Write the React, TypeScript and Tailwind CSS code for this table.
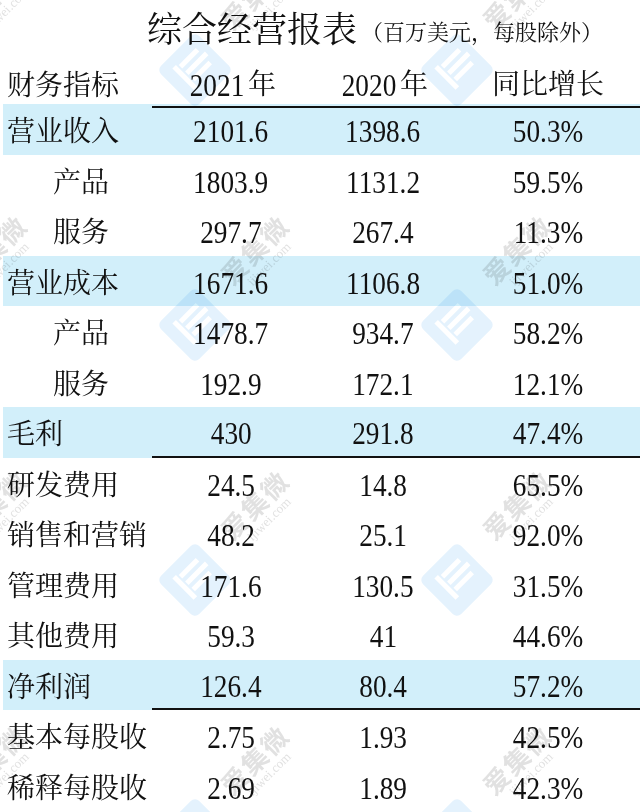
import clsx from "clsx";

type Row = {
  label: string;
  a: string;
  b: string;
  c: string;
  hl?: boolean;
  indent?: boolean;
  rule?: boolean;
};

const rows: Row[] = [
  { label: "营业收入", a: "2101.6", b: "1398.6", c: "50.3%", hl: true },
  { label: "产品", a: "1803.9", b: "1131.2", c: "59.5%", indent: true },
  { label: "服务", a: "297.7", b: "267.4", c: "11.3%", indent: true },
  { label: "营业成本", a: "1671.6", b: "1106.8", c: "51.0%", hl: true },
  { label: "产品", a: "1478.7", b: "934.7", c: "58.2%", indent: true },
  { label: "服务", a: "192.9", b: "172.1", c: "12.1%", indent: true },
  { label: "毛利", a: "430", b: "291.8", c: "47.4%", hl: true, rule: true },
  { label: "研发费用", a: "24.5", b: "14.8", c: "65.5%" },
  { label: "销售和营销", a: "48.2", b: "25.1", c: "92.0%" },
  { label: "管理费用", a: "171.6", b: "130.5", c: "31.5%" },
  { label: "其他费用", a: "59.3", b: "41", c: "44.6%" },
  { label: "净利润", a: "126.4", b: "80.4", c: "57.2%", hl: true, rule: true },
  { label: "基本每股收", a: "2.75", b: "1.93", c: "42.5%" },
  { label: "稀释每股收", a: "2.69", b: "1.89", c: "42.3%" },
];

// watermark spots (logo + "爱集微 / ijiwei.com"), repeated over the sheet
const logoSpots = [
  "-left-[107px] top-[30px]",
  "left-[155px] top-[30px]",
  "left-[417px] top-[30px]",
  "-left-[107px] top-[285px]",
  "left-[155px] top-[285px]",
  "left-[417px] top-[285px]",
  "-left-[107px] top-[540px]",
  "left-[155px] top-[540px]",
  "left-[417px] top-[540px]",
  "-left-[107px] top-[795px]",
  "left-[155px] top-[795px]",
  "left-[417px] top-[795px]",
];

const textSpots = [
  "-left-[62px] -top-[30px]",
  "left-[200px] -top-[30px]",
  "left-[462px] -top-[30px]",
  "-left-[62px] top-[225px]",
  "left-[200px] top-[225px]",
  "left-[462px] top-[225px]",
  "-left-[62px] top-[480px]",
  "left-[200px] top-[480px]",
  "left-[462px] top-[480px]",
  "-left-[62px] top-[735px]",
  "left-[200px] top-[735px]",
  "left-[462px] top-[735px]",
];

function Num({ children }: { children: string }) {
  return <span className="inline-block text-[31px] leading-none scale-x-[0.88]">{children}</span>;
}

function Logo() {
  return (
    <svg viewBox="0 0 80 80" className="w-20 h-20">
      <g transform="rotate(45 40 40)">
        <rect x="13" y="13" width="54" height="54" rx="6" fill="#c4e2fa" />
        <rect x="25" y="24" width="5" height="24" fill="#fff" />
        <rect x="34" y="20" width="5" height="28" fill="#fff" />
        <rect x="43" y="24" width="5" height="24" fill="#fff" />
        <rect x="23" y="50" width="30" height="5" fill="#fff" />
      </g>
    </svg>
  );
}

function Watermark() {
  return (
    <div className="absolute inset-0 pointer-events-none overflow-hidden mix-blend-multiply">
      {logoSpots.map((s) => (
        <div key={s} className={clsx("absolute opacity-45", s)}>
          <Logo />
        </div>
      ))}
      {textSpots.map((s) => (
        <div
          key={s}
          className={clsx(
            "absolute w-[120px] h-[60px] flex flex-col items-center justify-center -rotate-45 text-[#c4c4c4] opacity-50 font-['Noto_Sans_CJK_SC',sans-serif]",
            s
          )}
        >
          <span className="text-[26px] leading-none font-bold tracking-[2px]">爱集微</span>
          <span className="text-[13px] leading-tight font-['Liberation_Serif',serif]">ijiwei.com</span>
        </div>
      ))}
    </div>
  );
}

export default function App() {
  return (
    <div className="relative w-[640px] h-[812px] overflow-hidden bg-white text-[#111] font-['Liberation_Serif','Noto_Serif_CJK_SC','Noto_Sans_CJK_SC',serif]">
      <div className="h-[60px] flex items-center pl-[147px]">
        <h1 className="text-[35px] leading-none">综合经营报表</h1>
        <span className="ml-[4px] text-[22px] leading-none mt-[6px]">（百万美元，每股除外）</span>
      </div>

      <div className="ml-[3px] grid grid-cols-[149px_158px_146px_1fr] h-[44px]">
        <div className="flex items-center pl-[4px] pt-[4px] text-[28px]">财务指标</div>
        <div className="flex items-center justify-center pt-[4px] border-b-2 border-[#111]">
          <Num>2021</Num>
          <span className="text-[28px] leading-none">年</span>
        </div>
        <div className="flex items-center justify-center pt-[4px] border-b-2 border-[#111]">
          <Num>2020</Num>
          <span className="text-[28px] leading-none">年</span>
        </div>
        <div className="flex items-center justify-center pt-[4px] border-b-2 border-[#111] text-[28px]">
          同比增长
        </div>
      </div>

      {rows.map((r, i) => (
        <div
          key={i}
          className={clsx(
            "ml-[3px] grid grid-cols-[149px_158px_146px_1fr] h-[50.5px]",
            r.hl && "bg-[#d2effa]"
          )}
        >
          <div
            className={clsx(
              "flex items-center pt-[6px] text-[28px] leading-none whitespace-nowrap",
              r.indent ? "pl-[50px]" : "pl-[4px]"
            )}
          >
            {r.label}
          </div>
          <div className={clsx("flex items-center justify-center pt-[5px]", r.rule && "border-b-2 border-[#111]")}>
            <Num>{r.a}</Num>
          </div>
          <div className={clsx("flex items-center justify-center pt-[5px]", r.rule && "border-b-2 border-[#111]")}>
            <Num>{r.b}</Num>
          </div>
          <div className={clsx("flex items-center justify-center pt-[5px]", r.rule && "border-b-2 border-[#111]")}>
            <Num>{r.c}</Num>
          </div>
        </div>
      ))}

      <Watermark />
    </div>
  );
}
